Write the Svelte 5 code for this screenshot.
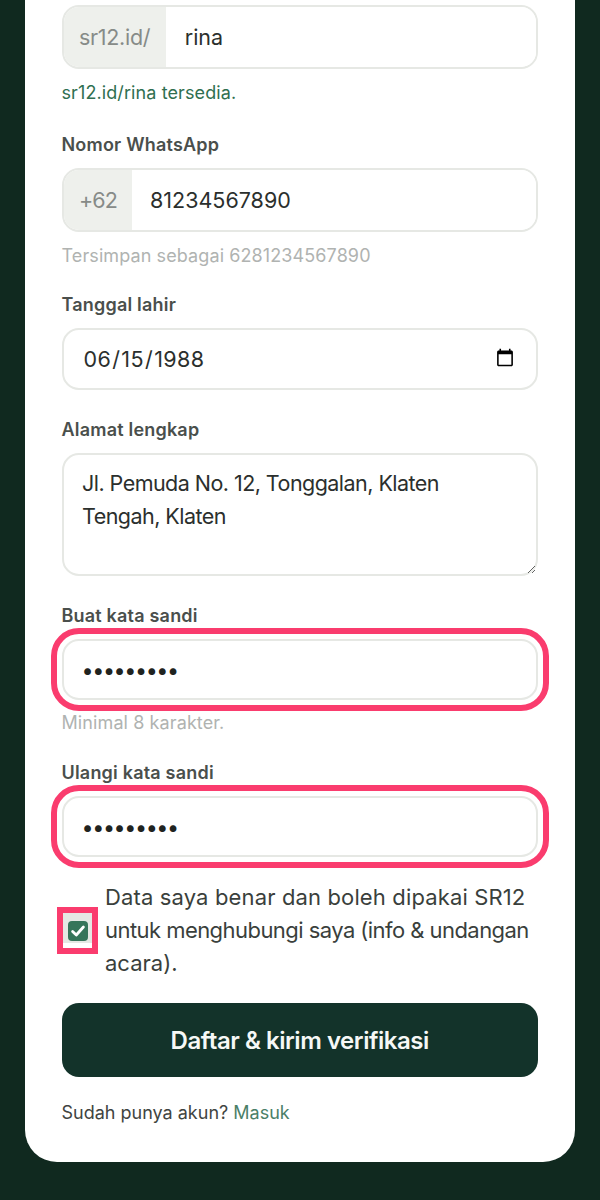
<script>
  const fields = {
    handle: 'rina',
    phone: '81234567890',
    birth: '1988-06-15',
    address: 'Jl. Pemuda No. 12, Tonggalan, Klaten Tengah, Klaten',
    password: 'password1'
  };
</script>

<div class="page">
  <main class="card">
    <div class="group first">
      <div class="joined">
        <span class="prefix">sr12.id/</span>
        <input class="bare handle" type="text" value={fields.handle} />
      </div>
      <p class="hint ok">sr12.id/rina tersedia.</p>
    </div>

    <div class="group">
      <label class="label" for="phone">Nomor WhatsApp</label>
      <div class="joined">
        <span class="prefix code">+62</span>
        <input id="phone" class="bare phone" type="text" value={fields.phone} />
      </div>
      <p class="hint">Tersimpan sebagai 6281234567890</p>
    </div>

    <div class="group spaced">
      <label class="label" for="birth">Tanggal lahir</label>
      <input id="birth" class="field date" type="date" value={fields.birth} />
    </div>

    <div class="group spaced">
      <label class="label" for="address">Alamat lengkap</label>
      <textarea id="address" class="field area" value={fields.address}></textarea>
    </div>

    <div class="group">
      <label class="label" for="pw">Buat kata sandi</label>
      <input id="pw" class="field flagged" type="password" value={fields.password} />
      <p class="hint after-flag">Minimal 8 karakter.</p>
    </div>

    <div class="group pull">
      <label class="label" for="pw2">Ulangi kata sandi</label>
      <input id="pw2" class="field flagged" type="password" value={fields.password} />
    </div>

    <div class="consent">
      <span class="check-wrap">
        <span class="check">
          <svg viewBox="0 0 20 20" width="20" height="20" aria-hidden="true">
            <path d="M4.6 10.4 8.3 14 15.4 6" fill="none" stroke="#fff" stroke-width="2.8" stroke-linecap="round" stroke-linejoin="round" />
          </svg>
        </span>
      </span>
      <p>
        <span class="line one">Data saya benar dan boleh dipakai SR12</span>
        <span class="line two">untuk menghubungi saya (info &amp; undangan</span>
        <span class="line">acara).</span>
      </p>
    </div>

    <button class="submit" type="button">Daftar &amp; kirim verifikasi</button>

    <p class="foot">Sudah punya akun? <a href="#masuk">Masuk</a></p>
  </main>
</div>

<style>
  :global(body) {
    margin: 0;
    background: #10291f;
  }

  .page {
    height: 1200px;
    overflow: hidden;
    padding: 0 25px;
    box-sizing: border-box;
    font-family: "Inter", "Noto Sans", sans-serif;
    color: #2b2f2d;
  }

  .card {
    height: 1162px;
    box-sizing: border-box;
    background: #fff;
    border-radius: 0 0 32px 32px;
    padding: 5px 37px 0 36.5px;
    display: flex;
    flex-direction: column;
  }

  .group {
    display: flex;
    flex-direction: column;
  }

  .group.first {
    margin-bottom: 3px;
  }

  .group.spaced {
    margin-bottom: 2px;
  }

  .group.pull {
    margin-top: 1px;
  }

  .label {
    height: 22px;
    line-height: 22px;
    font-size: 18px;
    font-weight: 600;
    letter-spacing: 0.2px;
    color: #4a4f4c;
    margin-top: 27px;
    margin-bottom: 12px;
  }

  .hint {
    margin: 13px 0 0;
    height: 22px;
    line-height: 22px;
    font-size: 18px;
    letter-spacing: 0.1px;
    color: #b0b3b1;
  }

  .hint.ok {
    color: #2f6f50;
  }

  .hint.after-flag {
    margin-top: 12px;
  }

  .joined {
    display: flex;
    height: 64px;
    box-sizing: border-box;
    border: 2px solid #e6e8e4;
    border-radius: 17px;
    overflow: hidden;
  }

  .prefix {
    display: flex;
    align-items: center;
    padding: 0 15.5px;
    background: #eef0ec;
    font-size: 21.5px;
    letter-spacing: -0.3px;
    color: #868b88;
  }

  .prefix.code {
    letter-spacing: -0.9px;
    padding-right: 15px;
  }

  .bare {
    flex: 1;
    min-width: 0;
    border: 0;
    outline: 0;
    background: #fff;
    padding: 0 19px;
    font: inherit;
    font-size: 21.5px;
    color: #2b2f2d;
  }

  .bare.phone {
    padding-left: 18px;
  }

  .field {
    display: block;
    width: 100%;
    box-sizing: border-box;
    border: 2px solid #e6e8e4;
    border-radius: 17px;
    background: #fff;
    padding: 0 19px;
    font: inherit;
    font-size: 21.5px;
    color: #2b2f2d;
    height: 61px;
  }

  .date {
    height: 62px;
    letter-spacing: 0.4px;
  }

  .date::-webkit-calendar-picker-indicator {
    width: 20px;
    height: 22px;
    padding: 0;
    margin-right: 2px;
  }

  .area {
    height: 123px;
    padding: 12px 18.5px;
    line-height: 33px;
    letter-spacing: -0.54px;
    resize: vertical;
  }

  .flagged {
    padding: 0 18px;
    letter-spacing: -1.4px;
    color: #1f2320;
    outline: 6px solid #fa3c6e;
    outline-offset: 5px;
  }

  .consent {
    display: flex;
    align-items: center;
    gap: 7px;
    margin-top: 24px;
    margin-left: -4.5px;
    font-size: 22px;
    line-height: 33px;
  }

  .consent p {
    margin: 0;
    flex: 1;
    color: #3a3f3c;
  }

  .line {
    display: block;
    white-space: nowrap;
  }

  .line.one {
    letter-spacing: 0.14px;
  }

  .line.two {
    letter-spacing: -0.55px;
  }

  .check-wrap {
    flex: none;
    display: flex;
    align-items: center;
    justify-content: center;
    width: 29px;
    height: 35px;
    box-sizing: border-box;
    background: linear-gradient(#e5e8e4 85%, #fff 85%);
    outline: 6px solid #fa3c6e;
    margin-left: 6px;
    margin-right: 6px;
  }

  .check {
    width: 20px;
    height: 20px;
    border-radius: 4px;
    background: #36755a;
    display: block;
  }

  .check svg {
    display: block;
  }

  .submit {
    margin-top: 23px;
    height: 74px;
    border: 0;
    border-radius: 17px;
    background: #13332a;
    color: #f6f8f6;
    font: inherit;
    font-size: 24px;
    font-weight: 600;
    letter-spacing: -0.45px;
  }

  .foot {
    margin: 25px 0 0;
    line-height: 22px;
    font-size: 18px;
    color: #3f4441;
  }

  .foot a {
    color: #4a7f68;
    text-decoration: none;
  }
</style>
